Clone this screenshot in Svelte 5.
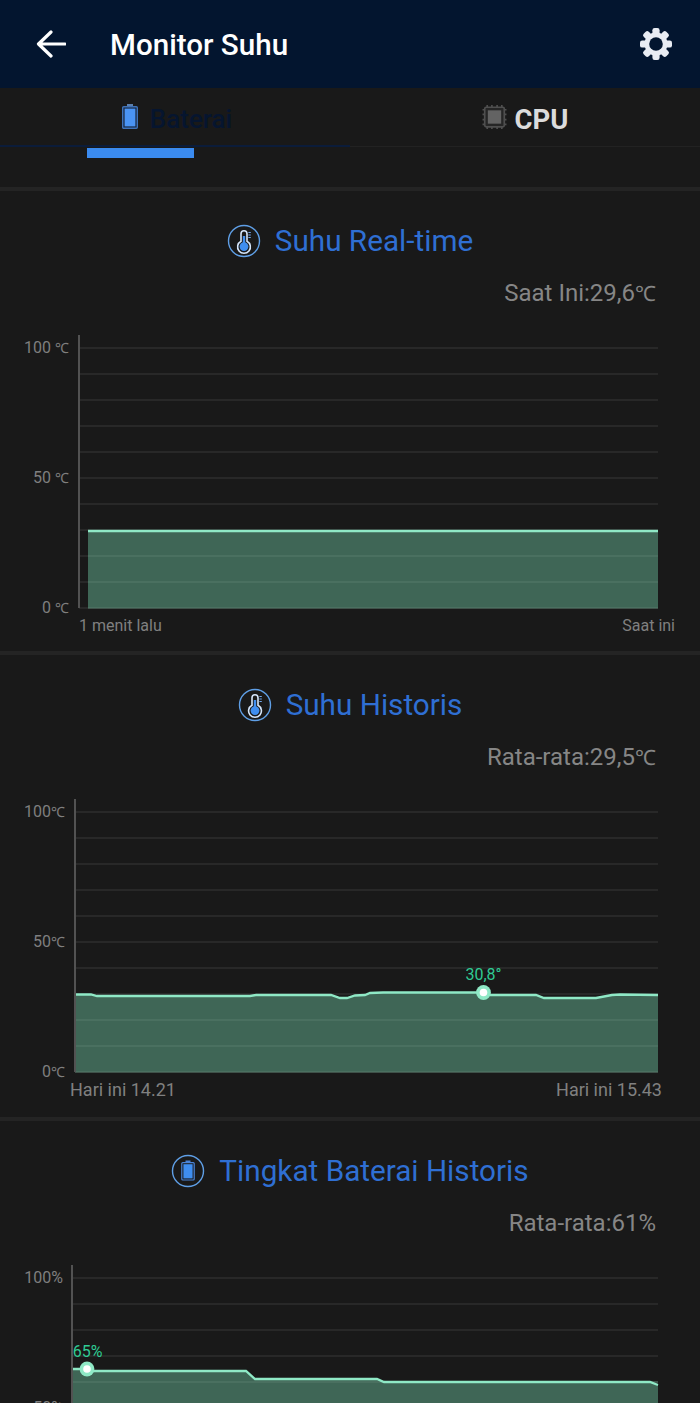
<script>
  const tenGrid = (start, n) => Array.from({ length: n }, (_, i) => start + i * 26);

  const charts = [
    {
      title: 'Suhu Real-time', icon: 'thermo', avg: ['Saat Ini:29,6', '℃'], top: 331, h: 320,
      axisX: 79, axisTop: 335, axisBottom: 608, grid: tenGrid(348, 11),
      line: [[88, 531], [658, 531]], bottom: 608,
      yLabels: [['100 ', '℃', 353], ['50 ', '℃', 483], ['0 ', '℃', 613]], yRight: 69,
      xLabels: [['1 menit lalu', 79, 'start', 631], ['Saat ini', 675, 'end', 631]],
      xSize: 16
    },
    {
      title: 'Suhu Historis', icon: 'thermo', avg: ['Rata-rata:29,5', '℃'], top: 795, h: 322,
      axisX: 75, axisTop: 799, axisBottom: 1072, grid: tenGrid(812, 11),
      line: [[75, 994.5], [91, 994.5], [97, 996], [250, 996], [256, 995], [331, 995], [340, 998], [347, 998], [355, 995.5], [365, 995], [370, 993], [383, 992.5], [483, 992.5], [490, 995], [536, 995], [544, 998], [596, 998], [612, 995], [620, 994.5], [658, 995]],
      bottom: 1072,
      yLabels: [['100', '℃', 817], ['50', '℃', 947], ['0', '℃', 1077]], yRight: 65,
      xLabels: [['Hari ini 14.21', 70, 'start', 1096], ['Hari ini 15.43', 662, 'end', 1096]],
      xSize: 18,
      marker: { x: 483.5, y: 992.5, label: '30,8°', lx: 483.5, ly: 980 }
    },
    {
      title: 'Tingkat Baterai Historis', icon: 'battery', avg: ['Rata-rata:61%', ''], top: 1261, h: 142,
      axisX: 72, axisTop: 1265, axisBottom: 1408, grid: tenGrid(1278, 6),
      line: [[72, 1369], [87, 1369], [92, 1371], [246, 1371], [255, 1379], [377, 1379], [384, 1382], [650, 1382], [658, 1385]],
      bottom: 1408,
      yLabels: [['100%', '', 1283], ['50%', '', 1413]], yRight: 63,
      xLabels: [], xSize: 16,
      marker: { x: 87, y: 1369, label: '65%', lx: 87.5, ly: 1357 }
    }
  ];

  const pts = (l) => l.map((p) => p.join(',')).join(' ');
  const area = (c) => `${c.line[0][0]},${c.bottom} ${pts(c.line)} ${c.line[c.line.length - 1][0]},${c.bottom}`;
  const teeth = [0, 45, 90, 135];
</script>

{#snippet thermo()}
  <svg class="badge" viewBox="0 0 34 34" aria-hidden="true">
    <circle cx="17" cy="17" r="15.5" fill="none" stroke="#5f9fe6" stroke-width="1.4" />
    <path d="M14 17.2V9.8a3 3 0 0 1 6 0v7.4a6.4 6.4 0 1 1-6 0z" fill="#191919" stroke="#d5e6fb" stroke-width="1.6" />
    <rect x="15.8" y="12" width="2.4" height="8" fill="#3f8ef0" />
    <circle cx="17" cy="22.6" r="4.4" fill="#3f8ef0" />
    <path d="M21.4 8.5h2.4M21.4 11h2.4M21.4 13.5h2.4" stroke="#6fa6ea" stroke-width="1" />
  </svg>
{/snippet}

{#snippet batteryBadge()}
  <svg class="badge" viewBox="0 0 34 34" aria-hidden="true">
    <circle cx="17" cy="17" r="15.5" fill="none" stroke="#5f9fe6" stroke-width="1.4" />
    <rect x="14.5" y="6.5" width="5" height="2.5" fill="#4a84d8" />
    <rect x="10.8" y="8.6" width="12.4" height="17.4" rx="1" fill="none" stroke="#4a84d8" stroke-width="1.2" />
    <rect x="12.4" y="10.2" width="9.2" height="14.2" fill="#3f8ef0" />
  </svg>
{/snippet}

<div class="page">
  <header class="bar">
    <svg class="back" viewBox="0 0 30 28" aria-hidden="true">
      <path d="M29 14H3M15 2 2.5 14 15 26" fill="none" stroke="#fff" stroke-width="3.2" stroke-linecap="round" stroke-linejoin="round" />
    </svg>
    <h1>Monitor Suhu</h1>
    <svg class="gear" viewBox="-16 -16 32 32" aria-hidden="true">
      {#each teeth as a}
        <rect x="-3.6" y="-16" width="7.2" height="32" rx="2.2" fill="#e9ecf3" transform="rotate({a})" />
      {/each}
      <circle r="11.5" fill="#e9ecf3" />
      <circle r="6.8" fill="#03152f" />
    </svg>
  </header>

  <nav class="tabs">
    <div class="tab active">
      <svg class="tab-ico bat" viewBox="0 0 16 25" aria-hidden="true">
        <rect x="5" y="0" width="6" height="3" fill="#5b7fae" />
        <rect x="0.7" y="2.7" width="14.6" height="21.6" rx="1" fill="#16263f" stroke="#3f72b8" stroke-width="1.4" />
        <rect x="2.6" y="4.6" width="10.8" height="17.8" fill="#4a94f4" />
      </svg>
      <span>Baterai</span>
      <i class="indicator"></i>
    </div>
    <div class="tab">
      <svg class="tab-ico chip" viewBox="0 0 24 24" aria-hidden="true">
        <path d="M5 0.5v3M9.5 0.5v3M14.5 0.5v3M19 0.5v3M5 20.5v3M9.5 20.5v3M14.5 20.5v3M19 20.5v3M0.5 5h3M0.5 9.5h3M0.5 14.5h3M0.5 19h3M20.5 5h3M20.5 9.5h3M20.5 14.5h3M20.5 19h3" stroke="#4f4f4f" stroke-width="1.6" />
        <rect x="2.6" y="2.6" width="18.8" height="18.8" rx="1.5" fill="#262626" stroke="#4f4f4f" stroke-width="1.6" />
        <rect x="5.6" y="5.6" width="12.8" height="12.8" fill="#636363" />
      </svg>
      <span>CPU</span>
    </div>
  </nav>

  {#each charts as c}
    <section class="card">
      <div class="title">
        {#if c.icon === 'thermo'}{@render thermo()}{:else}{@render batteryBadge()}{/if}
        <h2>{c.title}</h2>
      </div>
      <p class="avg">{c.avg[0]}<span class="unit">{c.avg[1]}</span></p>
      <svg class="chart" width="700" height={c.h} viewBox="0 {c.top} 700 {c.h}">
        {#each c.grid as y}
          <line x1={c.axisX} x2="658" y1={y} y2={y} class="grid" />
        {/each}
        <polygon points={area(c)} class="area" />
        {#each c.grid as y}
          {#if y > c.line[0][1]}
            <line x1={c.line[0][0]} x2="658" y1={y} y2={y} class="grid-in" />
          {/if}
        {/each}
        <polyline points={pts(c.line)} class="curve" />
        <line x1={c.axisX} x2={c.axisX} y1={c.axisTop} y2={c.axisBottom} class="axis" />
        {#each c.yLabels as [t, u, y]}
          <text x={c.yRight} {y} text-anchor="end" class="ylab">{t}<tspan class="yunit">{u}</tspan></text>
        {/each}
        {#each c.xLabels as [t, x, anchor, y]}
          <text {x} {y} text-anchor={anchor} class="xlab" font-size={c.xSize}>{t}</text>
        {/each}
        {#if c.marker}
          <text x={c.marker.lx} y={c.marker.ly} text-anchor="middle" class="mlab">{c.marker.label}</text>
          <circle cx={c.marker.x} cy={c.marker.y} r="7.4" fill="#8fe9c6" />
          <circle cx={c.marker.x} cy={c.marker.y} r="3.8" fill="#fff" />
        {/if}
      </svg>
    </section>
  {/each}
</div>

<style>
  :global(body) {
    margin: 0;
    background: #191919;
  }
  .page {
    width: 700px;
    height: 1403px;
    overflow: hidden;
    background: #191919;
    font-family: Roboto, "Liberation Sans", sans-serif;
  }
  .bar {
    height: 88px;
    background: #03152f;
    display: flex;
    align-items: center;
    padding: 0 28px 0 36px;
    box-sizing: border-box;
  }
  .back {
    width: 30px;
    height: 28px;
  }
  h1 {
    margin: 2px 0 0 44px;
    flex: 1;
    color: #fff;
    font-size: 29.6px;
    font-weight: 500;
  }
  .gear {
    width: 32px;
    height: 32px;
  }
  .tabs {
    display: grid;
    grid-template-columns: 1fr 1fr;
    height: 103px;
    box-sizing: border-box;
    border-bottom: 4px solid #242424;
  }
  .tab {
    position: relative;
    height: 59px;
    display: flex;
    align-items: center;
    justify-content: center;
    gap: 8px;
    font-size: 27.5px;
    font-weight: 700;
    color: #dcdcdc;
    box-sizing: border-box;
    border-bottom: 1px solid #222;
  }
  .tab span {
    padding-top: 4px;
  }
  .tab.active {
    gap: 12px;
    font-size: 26px;
    font-weight: 500;
    padding-left: 4px;
    color: #06152f;
    border-bottom: 2px solid #0b1c3a;
  }
  .tab-ico.bat {
    width: 16px;
    height: 25px;
  }
  .tab-ico.chip {
    width: 25px;
    height: 26px;
  }
  .indicator {
    position: absolute;
    left: 87px;
    top: 60px;
    width: 107px;
    height: 10px;
    background: #3b8bef;
  }
  .card {
    border-bottom: 4px solid #242424;
  }
  .title {
    display: flex;
    align-items: center;
    justify-content: center;
    gap: 14px;
    height: 42px;
    padding-top: 29px;
  }
  .badge {
    width: 34px;
    height: 34px;
    flex: none;
  }
  h2 {
    margin: 0 0 2px;
    color: #2f6fd3;
    font-size: 29.7px;
    font-weight: 400;
  }
  .avg {
    margin: 16px 44px 0 0;
    height: 30px;
    line-height: 30px;
    text-align: right;
    color: #868686;
    font-size: 24px;
  }
  .unit {
    font-size: 21px;
  }
  .chart {
    display: block;
    margin-top: 23px;
  }
  .grid {
    stroke: #383838;
    stroke-width: 1.1;
  }
  .grid-in {
    stroke: #567a6a;
    stroke-width: 1;
  }
  .area {
    fill: #3f6656;
  }
  .curve {
    fill: none;
    stroke: #8fe9c6;
    stroke-width: 2.3;
  }
  .axis {
    stroke: #525252;
    stroke-width: 2;
  }
  .ylab {
    fill: #7f7f7f;
    font-size: 16px;
  }
  .yunit {
    font-size: 14px;
  }
  .xlab {
    fill: #808080;
  }
  .mlab {
    fill: #2fcb94;
    font-size: 16px;
  }
</style>
